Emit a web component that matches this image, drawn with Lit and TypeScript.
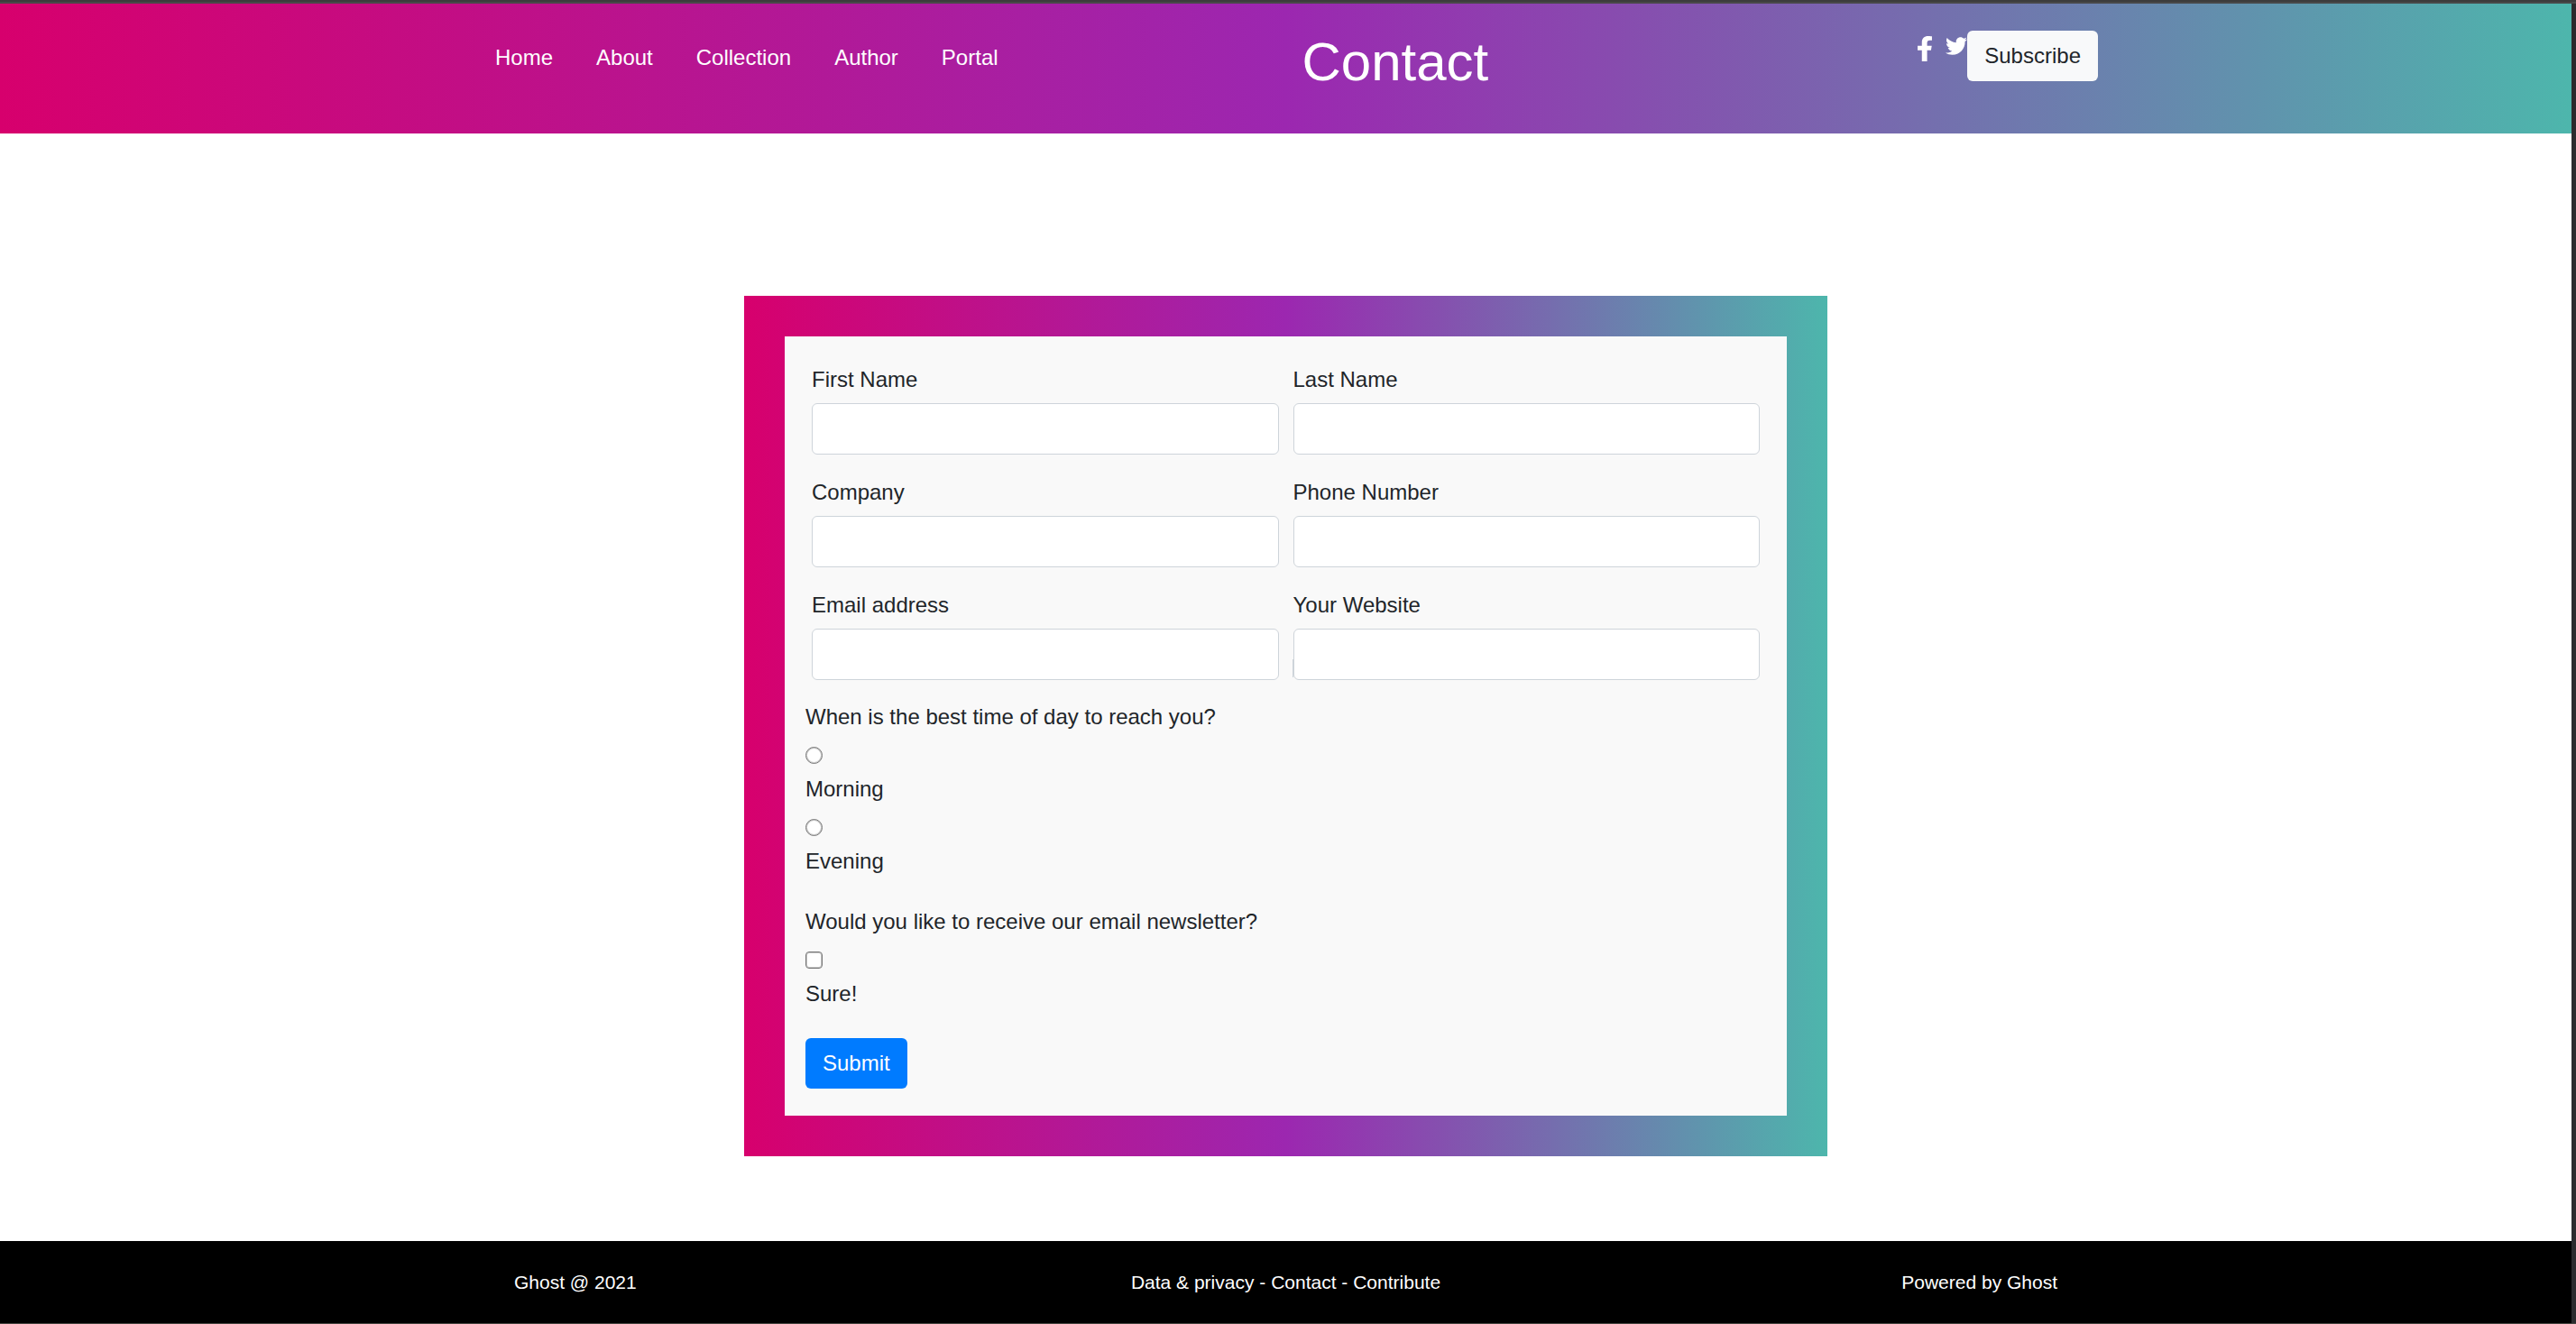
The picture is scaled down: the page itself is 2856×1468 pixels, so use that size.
import { LitElement, html, css, svg } from "lit";
import { customElement } from "lit/decorators.js";

const NAV_LINKS = ["Home", "About", "Collection", "Author", "Portal"];

const FIELDS = [
  { id: "first-name", label: "First Name", type: "text" },
  { id: "last-name", label: "Last Name", type: "text" },
  { id: "company", label: "Company", type: "text" },
  { id: "phone", label: "Phone Number", type: "tel" },
  { id: "email", label: "Email address", type: "email" },
  { id: "website", label: "Your Website", type: "url" },
];

const FACEBOOK = svg`<path d="M279.14 288l14.22-92.66h-88.91v-60.13c0-25.35 12.42-50.06 52.24-50.06h40.42V6.26S260.43 0 225.36 0c-73.22 0-121.08 44.38-121.08 124.72v70.62H22.89V288h81.39v224h100.17V288z"/>`;
const TWITTER = svg`<path d="M459.37 151.716c.325 4.548.325 9.097.325 13.645 0 138.72-105.583 298.558-298.558 298.558-59.452 0-114.68-17.219-161.137-47.106 8.447.974 16.568 1.299 25.34 1.299 49.055 0 94.213-16.568 130.274-44.832-46.132-.975-84.792-31.188-98.112-72.772 6.498.974 12.995 1.624 19.818 1.624 9.421 0 18.843-1.3 27.614-3.573-48.081-9.747-84.143-51.98-84.143-102.985v-1.299c13.969 7.797 30.214 12.67 47.431 13.319-28.264-18.843-46.781-51.005-46.781-87.391 0-19.492 5.197-37.36 14.294-52.954 51.655 63.675 129.3 105.258 216.365 109.807-1.624-7.797-2.599-15.918-2.599-24.04 0-57.828 46.782-104.934 104.934-104.934 30.213 0 57.502 12.67 76.67 33.137 23.715-4.548 46.456-13.32 66.599-25.34-7.798 24.366-24.366 44.833-46.132 57.827 21.117-2.273 41.584-8.122 60.426-16.243-14.292 20.791-32.161 39.308-52.628 54.253z"/>`;

@customElement("site-header")
class SiteHeader extends LitElement {
  static styles = css`
    :host {
      display: block;
      padding: 30px 24px 44px;
      background: linear-gradient(to right, #d7006d, #9c27b0, #4db6ac);
      color: #fff;
    }
    .inner {
      display: grid;
      grid-template-columns: 51% 49%;
      align-items: start;
      max-width: 1801px;
      margin: 0 auto;
    }
    .nav {
      display: flex;
      padding-top: 12px;
    }
    .nav-link {
      padding: 0 24px;
      color: inherit;
      text-decoration: none;
    }
    .side {
      display: flex;
      justify-content: space-between;
      align-items: flex-start;
    }
    .title {
      margin: 0;
      font-size: 60px;
      font-weight: 400;
      line-height: 70px;
    }
    .actions {
      display: flex;
      align-items: flex-start;
    }
    .social {
      display: flex;
      gap: 15px;
      padding-top: 6px;
    }
    .social-link {
      color: inherit;
      display: block;
    }
    .icon {
      display: block;
      fill: currentColor;
    }
    .subscribe {
      height: 56px;
      padding: 0 19px;
      border: 0;
      border-radius: 6px;
      background: #f8f9fa;
      color: #212529;
      font: inherit;
    }
  `;

  render() {
    return html`
      <div class="inner">
        <nav class="nav">
          ${NAV_LINKS.map((t) => html`<a class="nav-link" href="#">${t}</a>`)}
        </nav>
        <div class="side">
          <h1 class="title">Contact</h1>
          <div class="actions">
            <div class="social">
              <a class="social-link" href="#" aria-label="Facebook">
                <svg class="icon" width="16" height="28" viewBox="22 0 276 512" preserveAspectRatio="none">${FACEBOOK}</svg>
              </a>
              <a class="social-link" href="#" aria-label="Twitter">
                <svg class="icon" width="24" height="22" viewBox="0 24 512 469">${TWITTER}</svg>
              </a>
            </div>
            <button class="subscribe" type="button">Subscribe</button>
          </div>
        </div>
      </div>
    `;
  }
}

@customElement("contact-form")
class ContactForm extends LitElement {
  static styles = css`
    :host {
      display: block;
      max-width: 1201px;
      margin: 0 auto;
      padding: 45px;
      box-sizing: border-box;
      background: linear-gradient(to right, #d7006d, #9c27b0, #4db6ac);
    }
    .form {
      display: flex;
      flex-direction: column;
      padding: 30px 23px;
      background: #f9f9f9;
    }
    .fields {
      display: grid;
      grid-template-columns: 1fr 1fr;
      gap: 24px 16px;
      padding: 0 7px;
    }
    .field {
      display: flex;
      flex-direction: column;
      gap: 8px;
      position: relative;
    }
    /* Text-cursor mark resting against the last field's left edge */
    .field:last-child::before {
      content: "";
      position: absolute;
      left: -1px;
      bottom: 3px;
      width: 1px;
      height: 20px;
      background: #ced4da;
    }
    .text-input {
      box-sizing: border-box;
      width: 100%;
      height: 57px;
      padding: 8px 18px;
      border: 1px solid #ced4da;
      border-radius: 6px;
      background: #fff;
      color: #495057;
      font: inherit;
    }
    .group {
      margin: 0 0 31px;
      padding: 0;
      border: 0;
      min-width: 0;
    }
    .fields + .group {
      margin-top: 23px;
    }
    .question {
      padding: 0;
    }
    .choice {
      display: flex;
      flex-direction: column;
      align-items: flex-start;
      gap: 10px;
      padding-top: 15px;
    }
    .tick {
      appearance: none;
      box-sizing: border-box;
      width: 19px;
      height: 19px;
      margin: 0;
      border: 1px solid #767676;
      border-radius: 4px;
      background: #fff;
      box-shadow: inset 0 0 0 1px #c4c4c4;
    }
    .tick[type="radio"] {
      border-radius: 50%;
    }
    .tick:checked {
      border-color: #007bff;
      box-shadow: inset 0 0 0 3px #fff;
      background: #007bff;
    }
    .submit {
      align-self: flex-start;
      height: 56px;
      padding: 0 19px;
      border: 0;
      border-radius: 6px;
      background: #007bff;
      color: #fff;
      font: inherit;
    }
  `;

  render() {
    return html`
      <form class="form">
        <div class="fields">
          ${FIELDS.map(
            (f) => html`
              <div class="field">
                <label for=${f.id}>${f.label}</label>
                <input class="text-input" id=${f.id} name=${f.id} type=${f.type} />
              </div>
            `
          )}
        </div>
        <fieldset class="group">
          <legend class="question">When is the best time of day to reach you?</legend>
          <div class="choice">
            <input class="tick" id="morning" type="radio" name="time" value="morning" />
            <label for="morning">Morning</label>
          </div>
          <div class="choice">
            <input class="tick" id="evening" type="radio" name="time" value="evening" />
            <label for="evening">Evening</label>
          </div>
        </fieldset>
        <fieldset class="group">
          <legend class="question">Would you like to receive our email newsletter?</legend>
          <div class="choice">
            <input class="tick" id="newsletter" type="checkbox" name="newsletter" />
            <label for="newsletter">Sure!</label>
          </div>
        </fieldset>
        <button class="submit" type="submit">Submit</button>
      </form>
    `;
  }
}

@customElement("site-footer")
class SiteFooter extends LitElement {
  static styles = css`
    :host {
      display: block;
      padding: 30px 24px 29px;
      background: #000;
      color: #fff;
      font-size: 21px;
      line-height: 32px;
    }
    .inner {
      display: grid;
      grid-template-columns: 1fr auto 1fr;
      max-width: 1711px;
      margin: 0 auto;
    }
    .link {
      color: inherit;
      text-decoration: none;
    }
    .end {
      text-align: right;
    }
  `;

  render() {
    return html`
      <div class="inner">
        <span>Ghost @ 2021</span>
        <span><a class="link" href="#">Data &amp; privacy</a> - <a class="link" href="#">Contact</a> - <a class="link" href="#">Contribute</a></span>
        <span class="end">Powered by Ghost</span>
      </div>
    `;
  }
}

@customElement("app-root")
class AppRoot extends LitElement {
  static styles = css`
    :host {
      display: flex;
      flex-direction: column;
      box-sizing: border-box;
      min-height: 100vh;
      background: #2c2c2e;
      color: #212529;
      font-family: "Liberation Sans", Arial, sans-serif;
      font-size: 24px;
      line-height: 36px;
    }
    .edge {
      height: 2px;
      border-top: 2px solid #3c3c3c;
      background: #484848;
    }
    .page {
      flex: 1;
      display: flex;
      flex-direction: column;
      margin-right: 5px;
      background: #fff;
    }
    .main {
      flex: 1;
      padding: 180px 24px 90px;
    }
    .base {
      height: 1px;
      background: #45453f;
    }
  `;

  render() {
    return html`
      <div class="edge"></div>
      <div class="page">
        <site-header></site-header>
        <main class="main"><contact-form></contact-form></main>
        <site-footer></site-footer>
      </div>
      <div class="base"></div>
    `;
  }
}
